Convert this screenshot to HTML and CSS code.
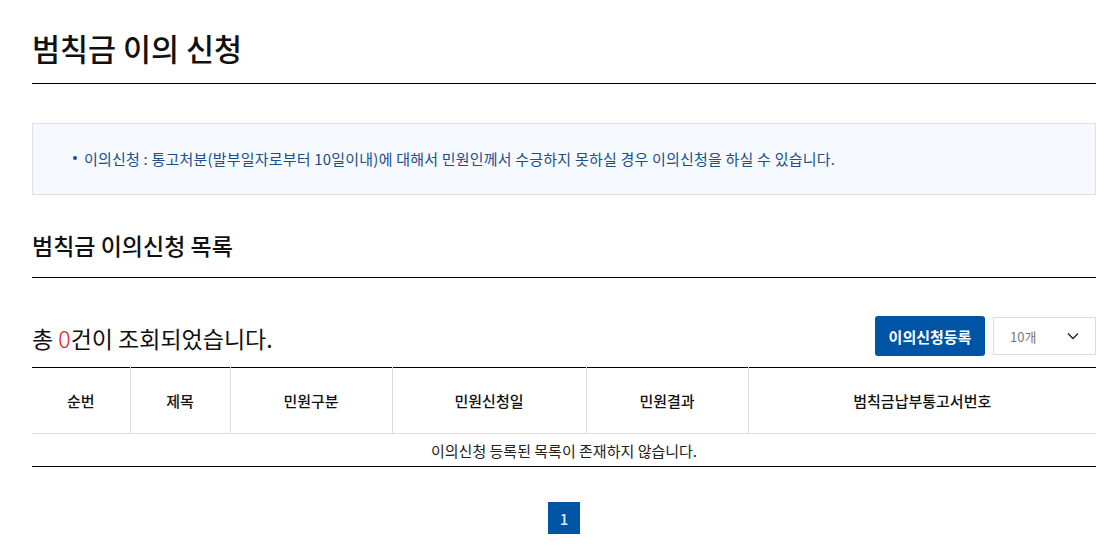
FILE: index.html
```html
<html>

<head>
    <title>범칙금 이의 신청</title>
    <link rel="stylesheet" href="styles.css">
</head>

<body>
    <div class="wrap">
        <h1 class="pageTitle">범칙금 이의 신청</h1>

        <div class="infoBox">
            <ul>
                <li>이의신청 : 통고처분(발부일자로부터 10일이내)에 대해서 민원인께서 수긍하지 못하실 경우 이의신청을 하실 수 있습니다.</li>
            </ul>
        </div>

        <h2 class="subTitle">범칙금 이의신청 목록</h2>

        <div class="listTop">
            <p class="count">총 <span class="num">0</span>건이 조회되었습니다.</p>
            <div class="tools">
                <button class="btnReg">이의신청등록</button>
                <div class="pageSize">
                    <span>10개</span>
                    <svg width="12" height="8" viewBox="0 0 12 8"><path d="M1 1.5l5 5 5-5" fill="none" stroke="#222" stroke-width="1.4"/></svg>
                </div>
            </div>
        </div>

        <table class="listTable">
            <colgroup>
                <col style="width:98px">
                <col style="width:100px">
                <col style="width:162px">
                <col style="width:194px">
                <col style="width:162px">
                <col>
            </colgroup>
            <tr class="head">
                <th>순번</th>
                <th>제목</th>
                <th>민원구분</th>
                <th>민원신청일</th>
                <th>민원결과</th>
                <th>범칙금납부통고서번호</th>
            </tr>
            <tr>
                <td colspan="6">이의신청 등록된 목록이 존재하지 않습니다.</td>
            </tr>
        </table>

        <div class="paging">
            <a class="on">1</a>
        </div>
    </div>
</body>

</html>
```

FILE: styles.css
```css
* {
    box-sizing: border-box;
}

body {
    margin: 0px;
    font-family: "Noto Sans CJK KR", "Noto Sans", sans-serif;
    color: #111;
    background-color: white;
}

.wrap {
    padding: 26px 13px 0 32px;
}

.pageTitle {
    margin: 0;
    font-size: 30.5px;
    font-weight: 500;
    line-height: 44px;
    padding-bottom: 13px;
    border-bottom: 1px solid #000;
}

.infoBox {
    margin-top: 39px;
    height: 72px;
    border: 1px solid #dcdfe4;
    background-color: #f6f9fe;
    display: flex;
    align-items: center;
    padding-left: 40px;
}

.infoBox ul {
    margin: 0;
    padding: 0;
    list-style: none;
}

.infoBox li {
    font-size: 15px;
    color: #1c4d8c;
    letter-spacing: 0.2px;
    position: relative;
    top: -1px;
}

.infoBox li::before {
    content: "";
    display: inline-block;
    width: 4px;
    height: 4px;
    border-radius: 2px;
    background-color: #1c4d8c;
    margin-right: 7px;
    vertical-align: middle;
    position: relative;
    top: -2px;
}

.subTitle {
    margin: 33px 0 0 0;
    font-size: 23px;
    font-weight: 500;
    line-height: 34px;
    padding-bottom: 15px;
    border-bottom: 1px solid #000;
}

.listTop {
    display: flex;
    justify-content: space-between;
    align-items: flex-end;
    margin-top: 38px;
    padding-bottom: 11px;
}

.count {
    margin: 0;
    font-size: 23px;
    line-height: 30px;
    position: relative;
    top: -3px;
}

.count .num {
    color: #e8141b;
    font-weight: 300;
}

.tools {
    display: flex;
    gap: 8px;
    align-items: center;
}

.btnReg {
    height: 40px;
    width: 110px;
    border: none;
    border-radius: 3px;
    background-color: #0054a6;
    color: white;
    font-family: inherit;
    font-size: 15px;
    font-weight: 700;
}

.pageSize {
    width: 103px;
    height: 38px;
    border: 1px solid #dcdcdc;
    display: flex;
    align-items: center;
    justify-content: space-between;
    padding: 0 16px 0 16px;
    font-size: 13px;
    color: #777;
}

.listTable {
    width: 100%;
    border-collapse: collapse;
    border-top: 1px solid #000;
    border-bottom: 1px solid #000;
    table-layout: fixed;
}

.listTable th {
    height: 66px;
    font-size: 15px;
    font-weight: 500;
    border-left: 1px solid #dcdcdc;
    border-bottom: 1px solid #dcdcdc;
    color: #111;
}

.listTable th:first-child {
    border-left: none;
}

.listTable td {
    height: 33px;
    text-align: center;
    font-size: 15px;
    color: #222;
}

.paging {
    display: flex;
    justify-content: center;
    margin-top: 35px;
}

.paging a {
    width: 32px;
    height: 32px;
    display: flex;
    align-items: center;
    justify-content: center;
    font-size: 15px;
    font-weight: 500;
    color: #d6ecff;
    background-color: #0054a6;
}
```
